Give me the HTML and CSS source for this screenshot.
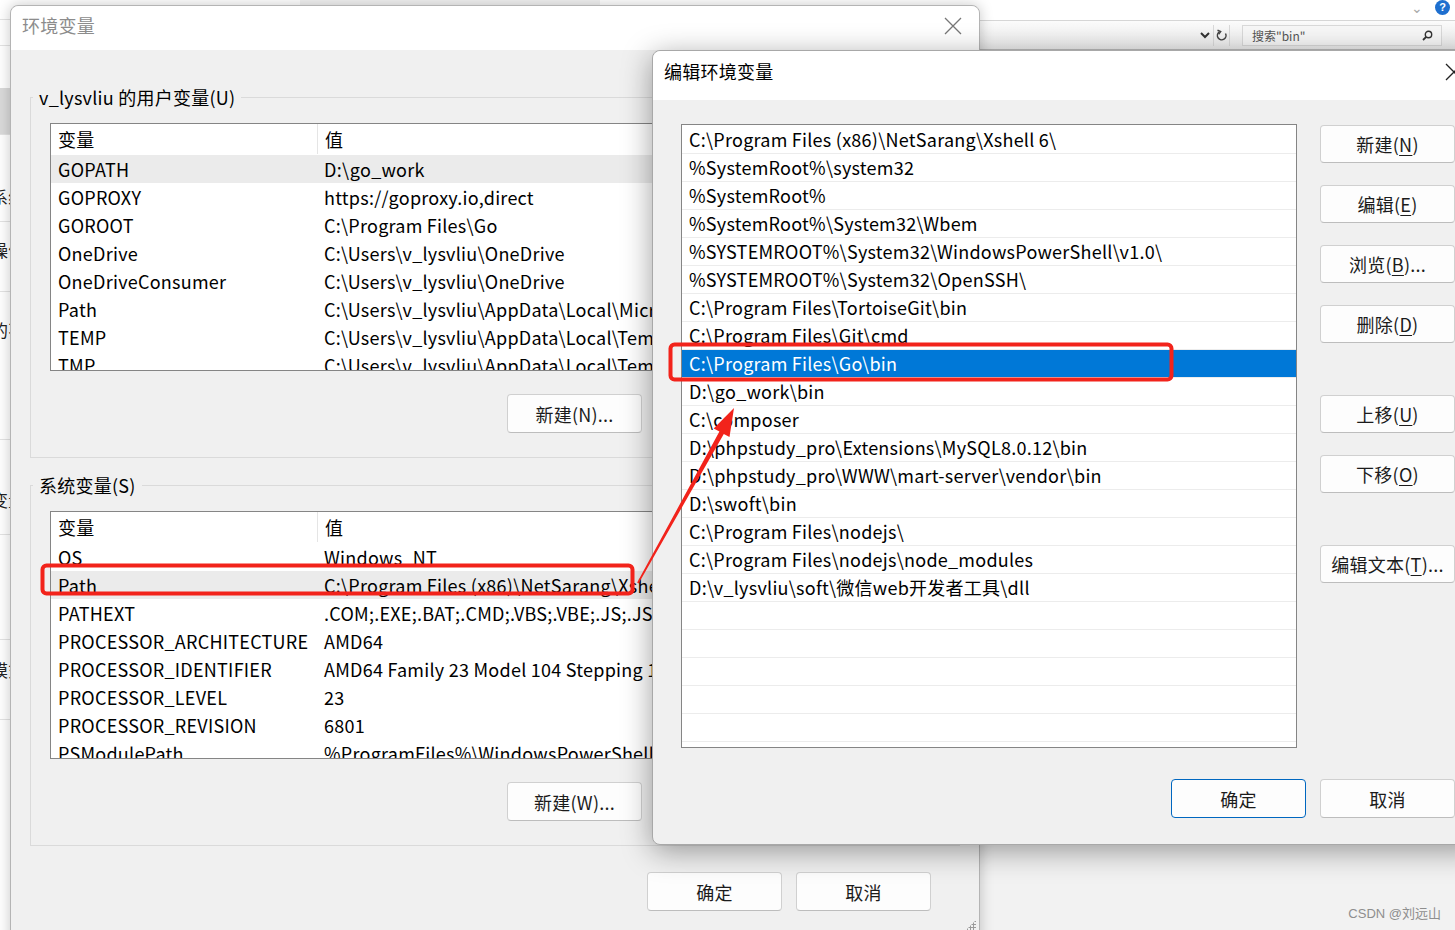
FILE: index.html
```html
<!DOCTYPE html>
<html>
<head>
    <meta charset="UTF-8">
    <title>环境变量</title>
    <link rel="stylesheet" href="styles.css">
</head>
<body>
    <!-- window behind, only a sliver shows on the left -->
    <div class="backwin">
        <div class="bw-row r1"></div>
        <div class="bw-row r2"></div>
        <div class="bw-row r3"></div>
        <div class="bw-row r4"></div>
        <div class="bw-row r5">系统</div>
        <div class="bw-row r6">操作</div>
        <div class="bw-row r7">的不</div>
        <div class="bw-row r8">变量</div>
        <div class="bw-row r9"></div>
        <div class="bw-row r10">模式</div>
        <div class="bw-row r11"></div>
    </div>

    <!-- explorer toolbar at top right -->
    <div class="explorer">
        <div class="ex-top">
            <span class="ex-chev">&#8964;</span>
            <span class="ex-help">?</span>
        </div>
        <div class="ex-bar">
            <span class="ex-cell">
                <svg width="10" height="8" viewBox="0 0 10 8"><path d="M1 2 L5 6 L9 2" fill="none" stroke="#333" stroke-width="2"/></svg>
            </span>
            <span class="ex-cell ex-refresh">
                <svg width="12" height="13" viewBox="0 0 12 13"><path d="M9.5 4.5 A4.3 4.3 0 1 1 3 3.2" fill="none" stroke="#444" stroke-width="1.5"/><path d="M1.5 1.2 L4.6 2.6 L2.6 5.2" fill="none" stroke="#444" stroke-width="1.5"/></svg>
            </span>
            <div class="ex-search">
                <span>搜索"bin"</span>
                <svg width="11" height="11" viewBox="0 0 11 11"><circle cx="6.5" cy="4.5" r="3.2" fill="none" stroke="#333" stroke-width="1.4"/><path d="M4.2 6.8 L1 10" stroke="#333" stroke-width="1.8"/></svg>
            </div>
        </div>
    </div>

    <!-- 环境变量 -->
    <section class="dlg env">
        <header class="env-title">
            <span>环境变量</span>
            <svg class="x-btn" width="18" height="18" viewBox="0 0 18 18"><path d="M1 1 L17 17 M17 1 L1 17" stroke="#777" stroke-width="1.3"/></svg>
        </header>
        <div class="env-body">
            <fieldset class="group">
                <legend>v_lysvliu 的用户变量(U)</legend>
                <div class="grid user-grid">
                    <div class="grid-head"><span>变量</span><span>值</span></div>
                    <div class="grid-row sel"><span>GOPATH</span><span>D:\go_work</span></div>
                    <div class="grid-row"><span>GOPROXY</span><span>https://goproxy.io,direct</span></div>
                    <div class="grid-row"><span>GOROOT</span><span>C:\Program Files\Go</span></div>
                    <div class="grid-row"><span>OneDrive</span><span>C:\Users\v_lysvliu\OneDrive</span></div>
                    <div class="grid-row"><span>OneDriveConsumer</span><span>C:\Users\v_lysvliu\OneDrive</span></div>
                    <div class="grid-row"><span>Path</span><span>C:\Users\v_lysvliu\AppData\Local\Microsoft\WindowsApps;</span></div>
                    <div class="grid-row"><span>TEMP</span><span>C:\Users\v_lysvliu\AppData\Local\Temp</span></div>
                    <div class="grid-row"><span>TMP</span><span>C:\Users\v_lysvliu\AppData\Local\Temp</span></div>
                </div>
                <div class="btn-row">
                    <button class="btn">新建(N)...</button>
                    <button class="btn">编辑(E)...</button>
                    <button class="btn">删除(D)</button>
                </div>
            </fieldset>

            <fieldset class="group">
                <legend>系统变量(S)</legend>
                <div class="grid sys-grid">
                    <div class="grid-head"><span>变量</span><span>值</span></div>
                    <div class="grid-row"><span>OS</span><span>Windows_NT</span></div>
                    <div class="grid-row sel"><span>Path</span><span>C:\Program Files (x86)\NetSarang\Xshell 6\;%SystemRoot%\system32;</span></div>
                    <div class="grid-row"><span>PATHEXT</span><span>.COM;.EXE;.BAT;.CMD;.VBS;.VBE;.JS;.JSE;.WSF;.WSH;.MSC</span></div>
                    <div class="grid-row"><span>PROCESSOR_ARCHITECTURE</span><span>AMD64</span></div>
                    <div class="grid-row"><span>PROCESSOR_IDENTIFIER</span><span>AMD64 Family 23 Model 104 Stepping 1, AuthenticAMD</span></div>
                    <div class="grid-row"><span>PROCESSOR_LEVEL</span><span>23</span></div>
                    <div class="grid-row"><span>PROCESSOR_REVISION</span><span>6801</span></div>
                    <div class="grid-row"><span>PSModulePath</span><span>%ProgramFiles%\WindowsPowerShell\Modules;</span></div>
                </div>
                <div class="btn-row">
                    <button class="btn">新建(W)...</button>
                    <button class="btn">编辑(I)...</button>
                    <button class="btn">删除(L)</button>
                </div>
            </fieldset>

            <div class="btn-row foot">
                <button class="btn">确定</button>
                <button class="btn">取消</button>
            </div>
            <span class="grip"></span>
        </div>
    </section>

    <!-- 编辑环境变量 -->
    <section class="dlg edit">
        <header class="edit-title">
            <span>编辑环境变量</span>
            <svg class="x-btn" width="18" height="18" viewBox="0 0 18 18"><path d="M1 1 L17 17 M17 1 L1 17" stroke="#222" stroke-width="1.3"/></svg>
        </header>
        <div class="edit-body">
            <div class="edit-main">
                <ul class="path-list">
                    <li>C:\Program Files (x86)\NetSarang\Xshell 6\</li>
                    <li>%SystemRoot%\system32</li>
                    <li>%SystemRoot%</li>
                    <li>%SystemRoot%\System32\Wbem</li>
                    <li>%SYSTEMROOT%\System32\WindowsPowerShell\v1.0\</li>
                    <li>%SYSTEMROOT%\System32\OpenSSH\</li>
                    <li>C:\Program Files\TortoiseGit\bin</li>
                    <li>C:\Program Files\Git\cmd</li>
                    <li class="sel">C:\Program Files\Go\bin</li>
                    <li>D:\go_work\bin</li>
                    <li>C:\composer</li>
                    <li>D:\phpstudy_pro\Extensions\MySQL8.0.12\bin</li>
                    <li>D:\phpstudy_pro\WWW\mart-server\vendor\bin</li>
                    <li>D:\swoft\bin</li>
                    <li>C:\Program Files\nodejs\</li>
                    <li>C:\Program Files\nodejs\node_modules</li>
                    <li>D:\v_lysvliu\soft\微信web开发者工具\dll</li>
                    <li></li>
                    <li></li>
                    <li></li>
                    <li></li>
                    <li></li>
                </ul>
                <div class="side-btns">
                    <button class="btn">新建(<u>N</u>)</button>
                    <button class="btn">编辑(<u>E</u>)</button>
                    <button class="btn">浏览(<u>B</u>)...</button>
                    <button class="btn">删除(<u>D</u>)</button>
                    <button class="btn gap">上移(<u>U</u>)</button>
                    <button class="btn">下移(<u>O</u>)</button>
                    <button class="btn gap">编辑文本(<u>T</u>)...</button>
                </div>
            </div>
            <div class="btn-row edit-foot">
                <button class="btn primary">确定</button>
                <button class="btn">取消</button>
            </div>
        </div>
    </section>

    <!-- red annotations -->
    <svg class="marks" width="1455" height="930" viewBox="0 0 1455 930">
        <rect x="670.5" y="344.5" width="501" height="35" rx="4" fill="none" stroke="#f2231b" stroke-width="4"/>
        <rect x="42.5" y="565.5" width="590" height="28" rx="4" fill="none" stroke="#f2231b" stroke-width="4"/>
        <polygon points="638.6,583.4 723.8,433.9 729.5,437 734,408 713.7,428.6 719.4,431.5 637.2,582.6" fill="#f2231b"/>
    </svg>

    <div class="watermark">CSDN @刘远山</div>
</body>
</html>
```

FILE: styles.css
```css
* {
    box-sizing: border-box;
}
html,
body {
    margin: 0;
}
body {
    position: relative;
    width: 1455px;
    height: 930px;
    overflow: hidden;
    background: #f2f2f2;
    font-family: "Noto Sans CJK SC", "Noto Sans", sans-serif;
    font-size: 18px;
    letter-spacing: 0.25px;
    color: #000;
}

/* back window */
.backwin {
    position: absolute;
    left: 0;
    top: 0;
    width: 300px;
    height: 930px;
    background: #fff;
    display: flex;
    flex-direction: column;
}
.bw-row {
    border-bottom: 1px solid #e3e3e3;
    padding-left: 0;
    margin-left: -9px;
    font-size: 17px;
    line-height: 24px;
    color: #222;
}
.r1 { height: 20px; }
.r2 { height: 26px; }
.r3 { height: 42px; border-bottom: none; }
.r4 { height: 47px; background: #dadada; }
.r5 { height: 87px; padding-top: 50px; }
.r6 { height: 70px; padding-top: 16px; }
.r7 { height: 148px; padding-top: 26px; }
.r8 { height: 95px; padding-top: 48px; }
.r9 { height: 105px; }
.r10 { height: 80px; padding-top: 18px; }
.r11 { flex: 1; border-bottom: none; }

/* explorer bar */
.explorer {
    position: absolute;
    left: 600px;
    top: 0;
    right: 0;
    height: 50px;
    background: #fff;
    letter-spacing: 0;
}
.ex-top {
    height: 20px;
    display: flex;
    justify-content: flex-end;
    align-items: center;
    gap: 12px;
    padding-right: 5px;
}
.ex-chev {
    color: #aaa;
    font-size: 14px;
    line-height: 10px;
    margin-top: -6px;
}
.ex-help {
    width: 15px;
    height: 15px;
    border-radius: 50%;
    background: #1e6fcf;
    color: #fff;
    font: bold 11px/15px "Liberation Sans", sans-serif;
    text-align: center;
    margin-top: -6px;
}
.ex-bar {
    height: 30px;
    border-top: 1px solid #d6d6d6;
    border-bottom: 1px solid #bcbcbc;
    background: linear-gradient(#fbfbfb, #ececec);
    display: flex;
    justify-content: flex-end;
    align-items: center;
    padding-right: 13px;
}
.ex-cell {
    height: 21px;
    width: 17px;
    display: flex;
    align-items: center;
    justify-content: center;
}
.ex-refresh {
    border-left: 1px solid #d9d9d9;
    border-right: 1px solid #d9d9d9;
    margin-right: 12px;
}
.ex-search {
    width: 200px;
    height: 21px;
    border: 1px solid #d9d9d9;
    background: #f7f7f7;
    display: flex;
    align-items: center;
    justify-content: space-between;
    padding: 1px 8px 0 9px;
    font-size: 12px;
    color: #555;
}

/* dialogs */
.dlg {
    position: absolute;
    background: #f0f0f0;
    display: flex;
    flex-direction: column;
}
.env {
    left: 10px;
    top: 5px;
    width: 970px;
    height: 940px;
    border: 1px solid #b4b4b4;
    border-radius: 8px 8px 0 0;
    box-shadow: 0 0 14px rgba(0, 0, 0, 0.22);
}
.env-title {
    height: 44px;
    flex: none;
    background: #fff;
    border-radius: 8px 8px 0 0;
    display: flex;
    align-items: flex-start;
    justify-content: space-between;
    padding: 7px 17px 0 11px;
    line-height: 24px;
    color: #8c8c8c;
}
.env-title .x-btn {
    margin-top: 4px;
}
.env-body {
    position: relative;
    flex: 1;
    padding: 35px 19px 0 19px;
}
.group {
    margin: 0;
    border: 1px solid #dadada;
    padding: 14px 19px 24px 19px;
}
.group + .group {
    margin-top: 15px;
}
.group legend {
    padding: 0 6px;
    margin-left: -17px;
    line-height: 24px;
}
.grid {
    border: 1px solid #858585;
    background: #fff;
    height: 248px;
    overflow: hidden;
}
.grid-head,
.grid-row {
    display: grid;
    grid-template-columns: 266px 1fr;
    white-space: nowrap;
}
.grid-head {
    height: 30px;
    align-items: center;
    margin-bottom: 1px;
}
.grid-head span + span {
    border-left: 1px solid #e5e5e5;
    height: 30px;
    line-height: 30px;
}
.grid-row {
    height: 28px;
    line-height: 28px;
}
.grid span {
    padding-left: 7px;
    overflow: hidden;
}
.grid-row.sel {
    background: #ebebeb;
}

.btn-row {
    display: flex;
    justify-content: flex-end;
    gap: 14px;
    margin-top: 23px;
}
.btn {
    width: 135px;
    height: 39px;
    border: 1px solid #d0d0d0;
    border-bottom-color: #bdbdbd;
    border-radius: 4px;
    background: #fdfdfd;
    font: inherit;
    letter-spacing: inherit;
    color: #1b1b1b;
    padding: 0;
}
.btn u {
    text-underline-offset: 3px;
}
.foot {
    margin-top: 26px;
    margin-right: 29px;
}
.grip {
    position: absolute;
    right: 3px;
    bottom: 14px;
    width: 10px;
    height: 10px;
    background: radial-gradient(circle, #9a9a9a 1px, transparent 1.2px) 0 0 / 3px 3px;
    clip-path: polygon(100% 0, 100% 100%, 0 100%);
}

.edit {
    left: 652px;
    top: 50px;
    width: 829px;
    height: 795px;
    border: 1px solid #a8a8a8;
    border-radius: 8px 0 0 8px;
    box-shadow: 0 6px 30px rgba(0, 0, 0, 0.38);
}
.edit-title {
    height: 49px;
    flex: none;
    background: #fff;
    border-radius: 8px 0 0 0;
    display: flex;
    align-items: flex-start;
    justify-content: space-between;
    padding: 8px 17px 0 11px;
    line-height: 24px;
}
.edit-title .x-btn {
    margin-top: 4px;
}
.edit-body {
    flex: 1;
    padding: 24px 25px 0 28px;
}
.edit-main {
    display: flex;
    gap: 23px;
}
.path-list {
    list-style: none;
    margin: 0;
    padding: 1px 0 0 0;
    width: 616px;
    height: 624px;
    border: 1px solid #858585;
    background: #fff;
    overflow: hidden;
}
.path-list li {
    height: 28px;
    line-height: 27px;
    border-bottom: 1px solid #ececec;
    padding-left: 7px;
    white-space: nowrap;
}
.path-list li.sel {
    background: #0078d7;
    color: #fff;
}
.side-btns {
    display: flex;
    flex-direction: column;
    gap: 22px;
    padding-top: 1px;
}
.side-btns .btn {
    flex: none;
    height: 38px;
}
.side-btns .gap {
    margin-top: 30px;
}
.edit-foot {
    margin-top: 31px;
    margin-right: 0;
}
.btn.primary {
    border: 1px solid #0067c0;
}

.marks {
    position: absolute;
    left: 0;
    top: 0;
    pointer-events: none;
}
.watermark {
    position: absolute;
    right: 14px;
    bottom: 8px;
    font-size: 13px;
    letter-spacing: 0;
    color: #8e8e8e;
    font-family: "Liberation Sans", "Noto Sans CJK SC", sans-serif;
}
```
